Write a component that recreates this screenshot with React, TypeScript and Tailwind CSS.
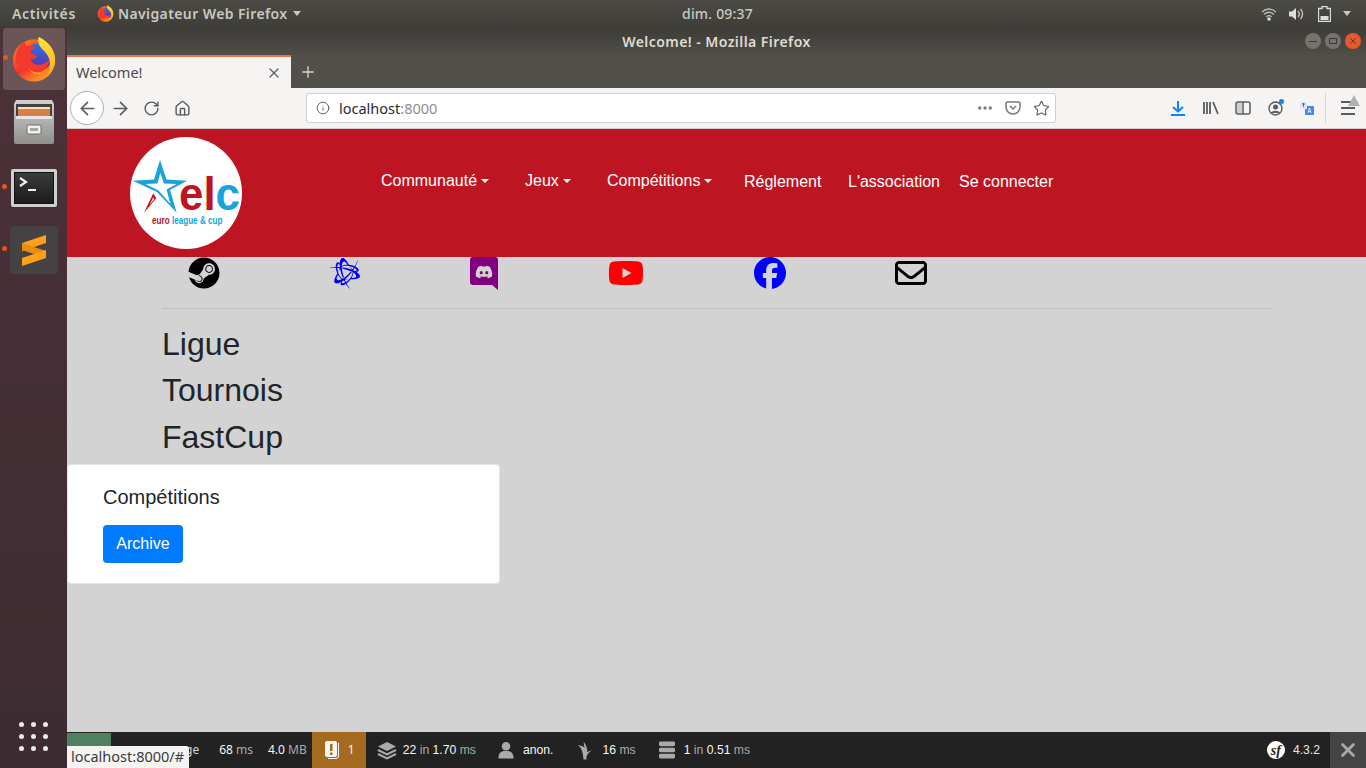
import {
  FaBattleNet,
  FaDiscord,
  FaFacebook,
  FaRegEnvelope,
  FaSteam,
  FaYoutube,
} from "react-icons/fa6";
import { ArrowLeft, ArrowRight, Home, Info, MoreHorizontal, Plus, RotateCw, Star, X } from "lucide-react";

function Firefox({ size, id }: { size: number; id: string }) {
  return (
    <svg width={size} height={size} viewBox="0 0 48 48">
      <defs>
        <linearGradient id={`${id}Body`} x1="0.1" y1="0.1" x2="0.7" y2="1">
          <stop offset="0" stopColor="#ff7a22" />
          <stop offset="0.55" stopColor="#f5332f" />
          <stop offset="1" stopColor="#ffa21f" />
        </linearGradient>
        <linearGradient id={`${id}Blue`} x1="0.5" y1="0" x2="0.5" y2="1">
          <stop offset="0" stopColor="#2f73dc" />
          <stop offset="1" stopColor="#5a2fb0" />
        </linearGradient>
        <linearGradient id={`${id}Tail`} x1="0.5" y1="0" x2="0.5" y2="1">
          <stop offset="0" stopColor="#ffe53d" />
          <stop offset="1" stopColor="#ffa81f" />
        </linearGradient>
      </defs>
      <circle cx="24" cy="25.500" r="22" fill={`url(#${id}Body)`} />
      <circle cx="28" cy="22" r="14.500" fill={`url(#${id}Blue)`} />
      <path d="M29 1C40 6 47 16 46 27 45 34 42 38 38 42 42 32 42 22 34 15 30 11 27 7 29 1z" fill={`url(#${id}Tail)`} />
      <path d="M5 24C5 15 9 9 14 6l2 5c4-2 8-1 10 1-4 1-6 4-5 6l6 3c-2 3-5 4-7 3 2 6 10 8 16 4l4-3c-2 10-10 15-18 13C12 36 5 32 5 24z" fill="#f23b2d" />
      <path d="M18 34c6 6 15 5 20 0-4 7-14 9-20 0z" fill="#ff9a24" />
    </svg>
  );
}

function DockDot() {
  return <span className="absolute left-[2px] top-1/2 -mt-[4px] h-[5px] w-[5px] rounded-full bg-[#e95420]" />;
}

function Dock() {
  return (
    <aside className="flex h-full w-[67px] shrink-0 flex-col items-center bg-gradient-to-b from-[#4d3139] to-[#3c2c31] pt-px">
      <div className="relative flex h-[62px] w-[62px] items-center justify-center rounded-[3px] bg-[#6b5557]">
        <span className="absolute left-0 top-[27px] h-[5px] w-[5px] rounded-full bg-[#e95420]" />
        <Firefox size={46} id="dockFx" />
      </div>
      <div className="relative mt-[10px] flex h-[44px] w-full items-center justify-center">
        <svg width="42" height="44" viewBox="0 0 42 44">
          <defs>
            <linearGradient id="fileBox" x1="0" y1="0" x2="0" y2="1">
              <stop offset="0" stopColor="#d0d0ce" />
              <stop offset="1" stopColor="#8f8f8d" />
            </linearGradient>
          </defs>
          <path d="M3 0h36l2 4v38a2 2 0 0 1-2 2H3a2 2 0 0 1-2-2V4z" fill="url(#fileBox)" />
          <rect x="3" y="4" width="36" height="13" fill="#45413d" />
          <rect x="5" y="7" width="32" height="2" fill="#f5e2c0" />
          <rect x="5" y="9" width="32" height="7" fill="#d9804a" />
          <rect x="3" y="16" width="36" height="3" fill="#e6e6e4" />
          <rect x="14" y="25" width="14" height="9" rx="1" fill="#f0f0ee" stroke="#6e6e6c" />
          <rect x="17" y="28" width="8" height="3" fill="#a5a5a3" />
        </svg>
      </div>
      <div className="relative mt-[25px] flex h-[38px] w-full items-center justify-center">
        <DockDot />
        <div className="flex h-[38px] w-[46px] rounded-[2px] border-[3px] border-[#cfcfcc] bg-gradient-to-b from-[#3c3c3c] to-[#1c1c1c] pl-[4px] pt-[4px] shadow-[inset_0_0_0_1px_#111]">
          <svg width="24" height="20" viewBox="0 0 24 20">
            <path d="M2 2l6 4-6 4" fill="none" stroke="#eeeeee" strokeWidth="2.200" />
            <rect x="10" y="13" width="8" height="2" fill="#eeeeee" />
          </svg>
        </div>
      </div>
      <div className="relative mt-[19px] flex h-[48px] w-full items-center justify-center">
        <DockDot />
        <div className="flex h-[48px] w-[48px] items-center justify-center rounded-[4px] bg-[#444242]">
          <svg width="24" height="32" viewBox="0 0 24 32">
            <path d="M0 9L24 1v8L0 17z" fill="#ffa11a" />
            <path d="M0 9l24 8v7L0 16z" fill="#e88c12" />
            <path d="M0 24l24-8v8L0 32z" fill="#ffa11a" />
          </svg>
        </div>
      </div>
      <div className="mt-auto mb-[17px] grid grid-cols-3 gap-x-[7px] gap-y-[7px]">
        {Array.from({ length: 9 }).map((_, i) => (
          <span key={i} className="h-[5px] w-[5px] rounded-full bg-[#ece9ea]" />
        ))}
      </div>
    </aside>
  );
}

function TopPanel() {
  return (
    <header className="relative flex h-[27px] shrink-0 items-center bg-gradient-to-b from-[#4d4b46] to-[#3e3d38] font-['Noto_Sans',sans-serif] text-[14px] font-semibold tracking-[0.4px] text-[#c9c9c3]">
      <span className="ml-3 tracking-[0.6px]">Activités</span>
      <span className="ml-[21px]">
        <Firefox size={17} id="panelFx" />
      </span>
      <span className="ml-[4px]">Navigateur Web Firefox</span>
      <span className="ml-[5px] h-0 w-0 border-x-[4.5px] border-t-[5px] border-x-transparent border-t-[#c9c9c3]" />
      <span className="absolute left-[682px] font-medium tracking-[0.2px]">dim. 09:37</span>
      <div className="ml-auto mr-[15px] flex items-center">
        <svg width="16" height="14" viewBox="0 0 16 14">
          <path d="M1 5c4-4 10-4 14 0M3 7.500c3-3 7-3 10 0M5.300 9.800c1.500-1.500 3.900-1.500 5.400 0" fill="none" stroke="#bdbdb8" strokeWidth="1.300" />
          <circle cx="8" cy="12" r="1.800" fill="#dddddd" />
        </svg>
        <svg className="ml-[11px]" width="16" height="14" viewBox="0 0 16 14">
          <path d="M1 4.500h3L8 1v12L4 9.500H1z" fill="#dddddd" />
          <path d="M10 4c1.500 1.700 1.500 4.300 0 6M12.500 2c2.500 3 2.500 7 0 10" fill="none" stroke="#bdbdb8" strokeWidth="1.400" />
        </svg>
        <svg className="ml-[14px]" width="13" height="16" viewBox="0 0 13 16">
          <path d="M4 .5h5v2h3.500v13H.500v-13H4z" fill="none" stroke="#dddddd" strokeWidth="1.300" />
          <rect x="2.500" y="10" width="8" height="4" fill="#dddddd" />
        </svg>
        <span className="ml-[12px] h-0 w-0 border-x-[4.5px] border-t-[5px] border-x-transparent border-t-[#c9c9c3]" />
      </div>
    </header>
  );
}

function TitleBar() {
  return (
    <div className="relative flex h-[28px] shrink-0 items-center justify-center bg-gradient-to-b from-[#3c3b37] to-[#504e48] font-['Noto_Sans',sans-serif] text-[14px] font-semibold tracking-[0.45px] text-[#dfdbd2]">
      Welcome! - Mozilla Firefox
      <div className="absolute right-[5px] top-[6px] flex gap-[4px]">
        <span className="flex h-4 w-4 items-center justify-center rounded-full bg-[#75736d]">
          <span className="h-px w-2 bg-[#3c3b37]" />
        </span>
        <span className="flex h-4 w-4 items-center justify-center rounded-full bg-[#75736d]">
          <span className="h-[6px] w-2 border border-[#3c3b37]" />
        </span>
        <span className="flex h-4 w-4 items-center justify-center rounded-full bg-[#e9582a]">
          <X size={10} strokeWidth={2} color="#3c3b37" />
        </span>
      </div>
    </div>
  );
}

function TabStrip() {
  return (
    <div className="flex h-[33px] shrink-0 items-stretch bg-[#514f49]">
      <div className="flex w-[224px] items-center border-t-2 border-[#e9724a] bg-[#f5f4f2] pl-[9px] pr-[9px] font-['Noto_Sans',sans-serif] text-[14.5px] text-[#4a4a4f]">
        Welcome!
        <X size={16} strokeWidth={1.8} className="ml-auto text-[#5a5a5e]" />
      </div>
      <div className="flex w-[34px] items-center justify-center text-[#d8d6d0]">
        <Plus size={18} strokeWidth={1.8} />
      </div>
    </div>
  );
}

function Toolbar() {
  return (
    <div className="flex h-[41px] shrink-0 items-center border-b border-[#cfcdca] bg-[#f5f4f2] pl-[3px] text-[#5b5b5f]">
      <span className="flex h-[34px] w-[34px] items-center justify-center rounded-full border border-[#b1b1b3] bg-white">
        <ArrowLeft size={21} strokeWidth={1.9} />
      </span>
      <ArrowRight size={21} strokeWidth={1.9} className="ml-[6px]" />
      <RotateCw size={17} strokeWidth={2} className="ml-[12px]" />
      <Home size={17} strokeWidth={2} className="ml-[14px]" />
      <div className="ml-[115px] flex h-[30px] w-[750px] items-center rounded-[3px] border border-[#cfcfd1] bg-white pl-[9px] pr-[5px] font-['Noto_Sans',sans-serif] text-[14.5px]">
        <Info size={14} strokeWidth={1.6} />
        <span className="ml-[9px] pt-px text-[#2a2a2e]">localhost</span>
        <span className="pt-px text-[#8d8d91]">:8000</span>
        <MoreHorizontal size={18} strokeWidth={2.4} className="ml-auto text-[#77777b]" />
        <svg className="ml-[11px]" width="16" height="16" viewBox="0 0 16 16">
          <path d="M2.500 2h11A1.500 1.500 0 0 1 15 3.500V7a7 7 0 0 1-14 0V3.500A1.500 1.500 0 0 1 2.500 2z" fill="none" stroke="#77777b" strokeWidth="1.500" />
          <path d="M5 6l3 3 3-3" fill="none" stroke="#77777b" strokeWidth="1.500" />
        </svg>
        <Star size={17} strokeWidth={1.7} className="ml-[12px] text-[#6a6a6e]" />
      </div>
      <svg className="ml-[114px]" width="16" height="16" viewBox="0 0 16 16">
        <path d="M8 1v10M3 7l5 4.500L13 7" fill="none" stroke="#0a84ff" strokeWidth="2" />
        <rect x="1" y="14" width="14" height="2" fill="#0a84ff" />
      </svg>
      <svg className="ml-[17px]" width="16" height="14" viewBox="0 0 16 14">
        <path d="M1 1v12M4 1v12M7 1v12M10 1l5 12" fill="none" stroke="#5b5b5f" strokeWidth="1.800" />
      </svg>
      <svg className="ml-[16px]" width="16" height="14" viewBox="0 0 16 14">
        <rect x="1" y="1" width="14" height="12" rx="2" fill="none" stroke="#5b5b5f" strokeWidth="1.500" />
        <rect x="2" y="2" width="5" height="10" fill="#5b5b5f" opacity="0.25" />
        <path d="M8 1v12" stroke="#5b5b5f" strokeWidth="1.500" />
      </svg>
      <span className="relative ml-[17px] flex">
        <svg width="15" height="15" viewBox="0 0 15 15">
          <circle cx="7.500" cy="7.500" r="6.500" fill="none" stroke="#5b5b5f" strokeWidth="1.400" />
          <circle cx="7.500" cy="6" r="2.500" fill="#5b5b5f" />
          <path d="M3 12c1-3 8-3 9 0z" fill="#5b5b5f" />
        </svg>
        <span className="absolute -right-[1px] -top-[2px] h-[5px] w-[5px] rounded-full bg-[#0a84ff]" />
      </span>
      <svg className="ml-[17px]" width="14" height="15" viewBox="0 0 14 15">
        <rect x="5" y="5" width="9" height="9" rx="1" fill="#4a86e8" />
        <path d="M0 1h7v7H0z" fill="#dbe5f5" />
        <path d="M2 3h3M3.500 2v4" stroke="#666" strokeWidth="1" />
        <path d="M8 12l1.500-5 1.500 5M8.700 10.500h1.600" fill="none" stroke="#ffffff" strokeWidth="0.800" />
      </svg>
      <span className="ml-[11px] h-[30px] w-px bg-[#d7d6d4]" />
      <span className="relative ml-[15px] flex h-[14px] w-[14px] flex-col justify-between">
        <span className="h-[2px] bg-[#5b5b5f]" />
        <span className="h-[2px] bg-[#5b5b5f]" />
        <span className="h-[2px] bg-[#5b5b5f]" />
        <svg className="absolute -right-[5px] -top-[6px]" width="12" height="11" viewBox="0 0 12 11">
          <path d="M6 0l6 11H0z" fill="#b1b1b3" />
        </svg>
      </span>
    </div>
  );
}

function Logo() {
  return (
    <div className="h-[112px] w-[112px] shrink-0 rounded-full bg-white">
      <svg width="112" height="112" viewBox="0 0 112 112">
        <path d="M30 23l6.500 19.500 20.500 1.200L40 53l6.700 22.700L27 55 2.700 43.700 24 42.500z" fill="#18a3dc" />
        <path d="M30.300 36l3.700 10.500 12.500.500-10 5.500L40.500 67 28.500 53.500 15.500 47l12-.500z" fill="#ffffff" />
        <path d="M14 75.700L23.300 56.300l3 5z" fill="#bd1622" />
        <path d="M19.500 68l3.800-7.500 1 1.500z" fill="#ffffff" />
        <text x="49" y="73" fontFamily="'Liberation Sans', sans-serif" fontWeight="700" fontSize="46" textLength="61" lengthAdjust="spacingAndGlyphs">
          <tspan fill="#bd1622">el</tspan>
          <tspan fill="#18a3dc">c</tspan>
        </text>
        <text x="22" y="87" fontFamily="'Liberation Sans', sans-serif" fontWeight="700" fontSize="10.500" textLength="70.500" lengthAdjust="spacingAndGlyphs">
          <tspan fill="#bd1622">euro </tspan>
          <tspan fill="#18a3dc">league &amp; cup</tspan>
        </text>
      </svg>
    </div>
  );
}

function Caret({ label }: { label: string }) {
  return (
    <span className="flex items-center">
      {label}
      <span className="ml-[4px] h-0 w-0 border-x-[4.8px] border-t-[4.8px] border-x-transparent border-t-white" />
    </span>
  );
}

function SiteHeader() {
  return (
    <div className="flex h-[128px] shrink-0 items-start bg-[#bd1622] pl-[63px] pt-[8px] text-base text-white">
      <Logo />
      <nav className="relative ml-[139px] mt-[32px] flex h-[40px] w-[700px] items-start">
        <span className="absolute left-0 top-0"><Caret label="Communauté" /></span>
        <span className="absolute left-[144px] top-0"><Caret label="Jeux" /></span>
        <span className="absolute left-[226px] top-0"><Caret label="Compétitions" /></span>
        <span className="absolute left-[363px] top-px">Réglement</span>
        <span className="absolute left-[467px] top-px">L'association</span>
        <span className="absolute left-[578px] top-px">Se connecter</span>
      </nav>
    </div>
  );
}

function DiscordBubble() {
  return (
    <span className="relative ml-[110px] h-[33px] w-[28px] shrink-0 self-start">
      <svg width="28" height="33" viewBox="0 0 28 33">
        <path d="M3 0h22a3 3 0 0 1 3 3v30l-6-5H3a3 3 0 0 1-3-3V3a3 3 0 0 1 3-3z" fill="#800080" />
      </svg>
      <FaDiscord size={18} color="#d3d3d3" className="absolute left-[5px] top-[6px]" />
    </span>
  );
}

function Socials() {
  return (
    <div className="flex h-[32px] items-center pl-[121px]">
      <FaSteam size={32} color="#000000" />
      <FaBattleNet size={31} color="#0000ff" className="ml-[109px]" />
      <DiscordBubble />
      <FaYoutube size={36} color="#ff0000" className="ml-[110px]" />
      <FaFacebook size={32} color="#0000ff" className="ml-[110px]" />
      <FaRegEnvelope size={32} color="#000000" className="ml-[109px]" />
    </div>
  );
}

function DebugBar() {
  const label = "text-[#aaaaaa]";
  const value = "text-[#f5f5f5]";
  return (
    <div className="relative flex h-[36px] shrink-0 items-center bg-[#222222] font-['Liberation_Sans',sans-serif] text-[12.2px]">
      <span className="absolute left-0 top-px h-[35px] w-[44px] bg-[#4f8060]" />
      <span className="ml-[118px] font-['Noto_Sans',sans-serif] text-[12px] text-[#d8d8d8]">ge</span>
      <span className={`ml-[20px] font-['Noto_Sans',sans-serif] text-[12px] ${value}`}>68 <span className={label}>ms</span></span>
      <span className={`ml-[15px] font-['Noto_Sans',sans-serif] text-[12px] ${value}`}>4.0 <span className={label}>MB</span></span>
      <span className="ml-[5px] flex h-full w-[54px] items-center bg-[#a46a1f] pl-[12px] font-['Noto_Sans',sans-serif] text-[12px] text-[#f5f5f5]">
        <svg width="16" height="20" viewBox="0 0 16 20">
          <rect x="1" y="1" width="12" height="16" rx="2" fill="#f5f5f5" />
          <path d="M14.500 3v13a2.500 2.500 0 0 1-2.500 2.500H4" fill="none" stroke="#f5f5f5" />
          <rect x="6" y="4" width="2.500" height="7" fill="#a46a1f" />
          <rect x="6" y="12.500" width="2.500" height="2.500" fill="#a46a1f" />
        </svg>
        <span className="ml-[8px]">1</span>
      </span>
      <svg className="ml-[11px]" width="20" height="20" viewBox="0 0 20 20">
        <path d="M10 2l9 4.500-9 4.500-9-4.500z" fill="#aaaaaa" />
        <path d="M1 10l9 4.500 9-4.500M1 14l9 4.500 9-4.500" fill="none" stroke="#aaaaaa" strokeWidth="2" />
      </svg>
      <span className={`ml-[6px] ${value}`}>22 <span className={label}>in</span> 1.70 <span className={label}>ms</span></span>
      <svg className="ml-[22px]" width="16" height="18" viewBox="0 0 17 18">
        <circle cx="8.500" cy="5" r="4.500" fill="#aaaaaa" />
        <path d="M0.500 18c0-5 2-7 5-8h6c3 1 5 3 5 8z" fill="#aaaaaa" />
      </svg>
      <span className={`ml-[9px] ${value}`}>anon.</span>
      <svg className="ml-[23px]" width="17" height="20" viewBox="0 0 18 20">
        <path d="M1 5c4 1 6 5 7 15h3c0-5 2-7 6-10l-5 2c0-4-1-7-4-11l1 7C8 6 5 5 1 5z" fill="#aaaaaa" />
      </svg>
      <span className={`ml-[9px] ${value}`}>16 <span className={label}>ms</span></span>
      <svg className="ml-[23px]" width="16" height="18" viewBox="0 0 17 18">
        <rect x="0" y="0" width="17" height="5" rx="1.500" fill="#aaaaaa" />
        <rect x="0" y="6.500" width="17" height="5" rx="1.500" fill="#aaaaaa" />
        <rect x="0" y="13" width="17" height="5" rx="1.500" fill="#aaaaaa" />
      </svg>
      <span className={`ml-[9px] ${value}`}>1 <span className={label}>in</span> 0.51 <span className={label}>ms</span></span>
      <span className="ml-auto flex h-[18px] w-[18px] items-center justify-center rounded-full bg-white font-['Liberation_Serif',serif] text-[14px] font-bold italic text-[#222222]">sf</span>
      <span className="ml-[8px] text-[#e0e6ea]">4.3.2</span>
      <span className="ml-[10px] flex h-full w-[36px] items-center justify-center bg-[#444444] text-[#aaaaaa]">
        <X size={22} strokeWidth={3} />
      </span>
      <span className="absolute left-0 top-[14px] flex h-[22px] items-center rounded-tr-[3px] bg-[#f5f4f2] pl-[4px] pr-[5px] font-['Noto_Sans',sans-serif] text-[14.5px] text-[#3a3a3e]">
        localhost:8000/#
      </span>
    </div>
  );
}

export default function App() {
  return (
    <div className="flex h-[768px] w-[1366px] flex-col overflow-hidden font-['Liberation_Sans',Arial,sans-serif]">
      <TopPanel />
      <div className="flex min-h-0 flex-1">
        <Dock />
        <div className="flex min-w-0 flex-1 flex-col">
          <TitleBar />
          <TabStrip />
          <Toolbar />
          <SiteHeader />
          <main className="min-h-0 flex-1 bg-[#d3d3d3] text-[#212529]">
            <Socials />
            <div className="ml-[95px] mr-[94px] mt-[19px] border-t border-black/10 pt-[16px]">
              <h2 className="mb-2 text-[32px] leading-[38.4px]">Ligue</h2>
              <h2 className="mb-2 text-[32px] leading-[38.4px]">Tournois</h2>
              <h2 className="mb-2 text-[32px] leading-[38.4px]">FastCup</h2>
            </div>
            <section className="mt-[4px] h-[120px] w-[433px] rounded-[4px] border border-black/10 bg-white pl-[35px] pt-[20px]">
              <h5 className="mb-4 text-[20px] leading-6">Compétitions</h5>
              <button className="h-[38px] w-[80px] rounded-[4px] bg-[#007bff] text-base text-white">Archive</button>
            </section>
          </main>
          <DebugBar />
        </div>
      </div>
    </div>
  );
}
